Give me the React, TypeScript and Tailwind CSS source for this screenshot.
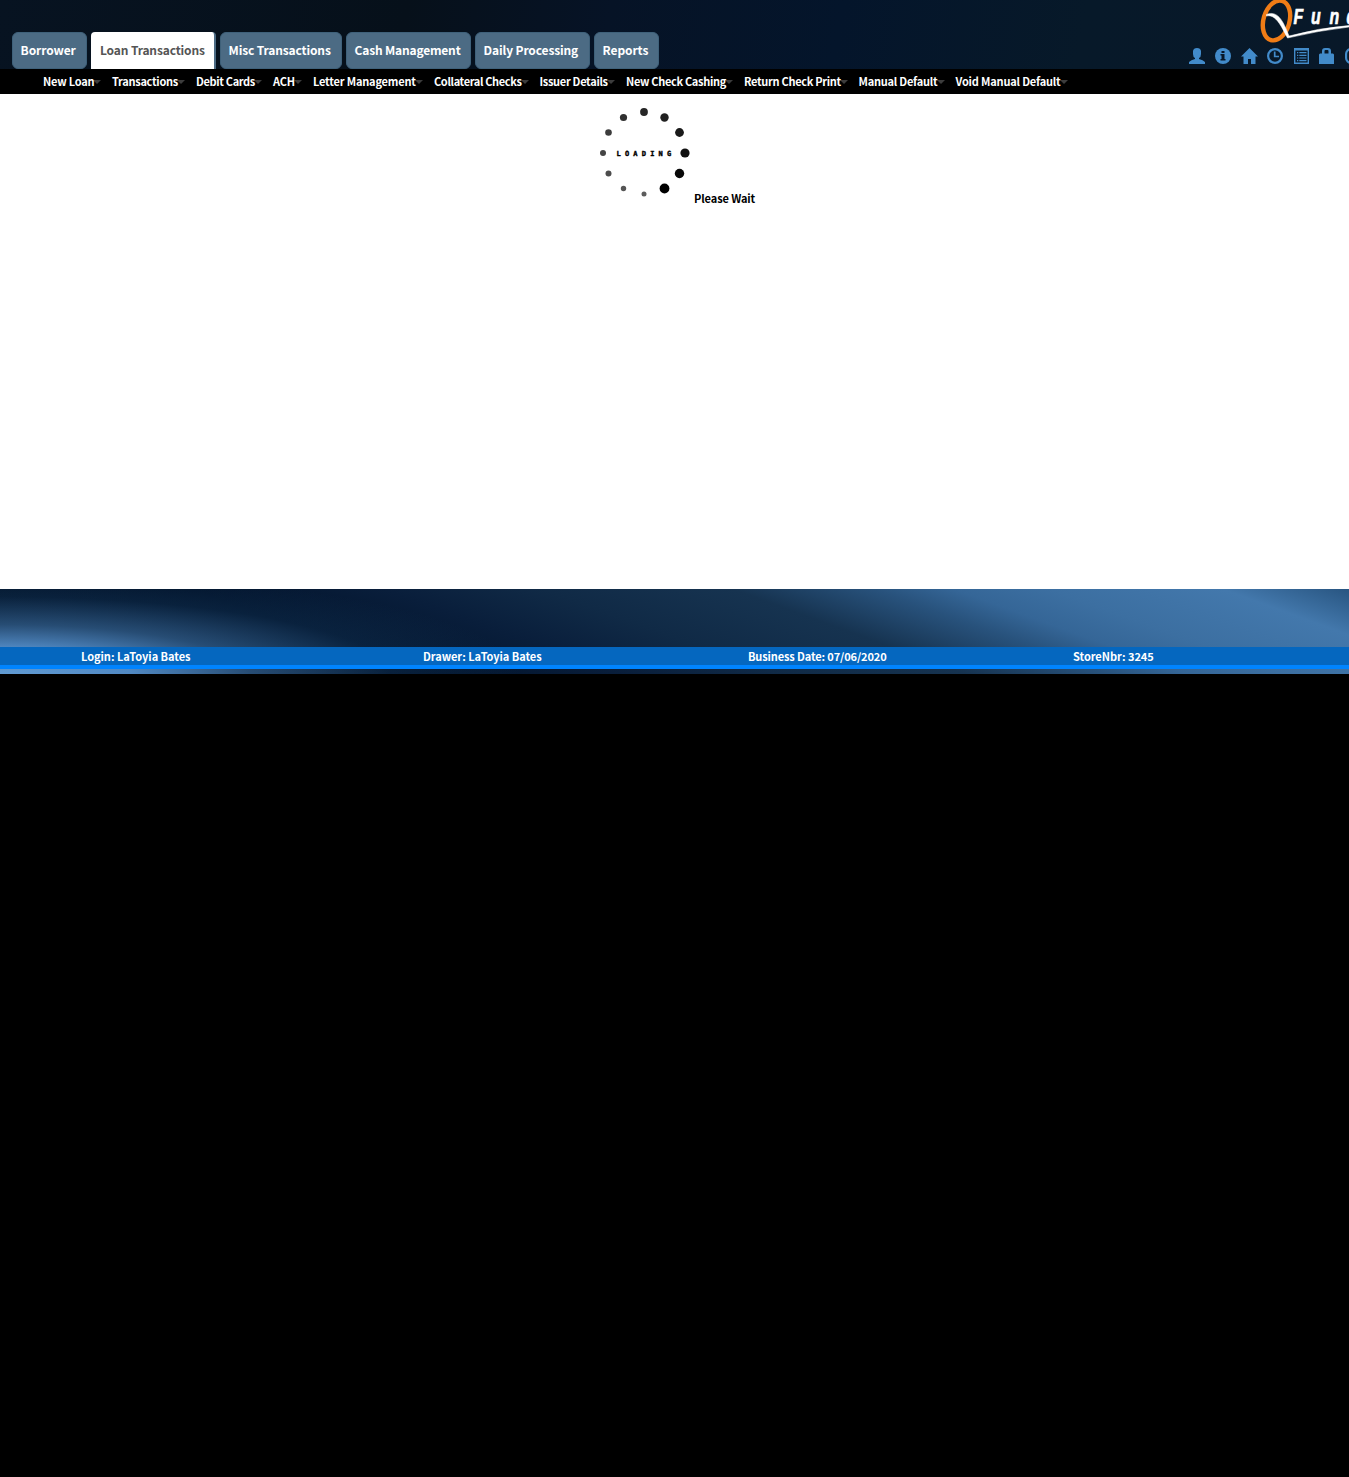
import React from "react";

const tabs = [
  { label: "Borrower", width: "w-[75px]", track: "tracking-[-0.1px]" },
  { label: "Loan Transactions", width: "w-[125px]", track: "tracking-[-0.14px]", active: true },
  { label: "Misc Transactions", width: "w-[122px]", track: "tracking-[-0.14px]" },
  { label: "Cash Management", width: "w-[125px]", track: "tracking-[-0.18px]" },
  { label: "Daily Processing", width: "w-[115px]", track: "tracking-[-0.13px]" },
  { label: "Reports", width: "w-[65px]", track: "tracking-[-0.1px]" },
];

const menu = [
  { label: "New Loan", width: "w-[51px]", track: "tracking-[-0.22px]" },
  { label: "Transactions", width: "w-[66px]", track: "tracking-[-0.28px]" },
  { label: "Debit Cards", width: "w-[59px]", track: "tracking-[-0.34px]" },
  { label: "ACH", width: "w-[22px]", track: "tracking-[-0.2px]" },
  { label: "Letter Management", width: "w-[103px]", track: "tracking-[-0.18px]" },
  { label: "Collateral Checks", width: "w-[87.5px]", track: "tracking-[-0.35px]" },
  { label: "Issuer Details", width: "w-[68.5px]", track: "tracking-[-0.3px]" },
  { label: "New Check Cashing", width: "w-[100px]", track: "tracking-[-0.32px]" },
  { label: "Return Check Print", width: "w-[96.5px]", track: "tracking-[-0.3px]" },
  { label: "Manual Default", width: "w-[79px]", track: "tracking-[-0.22px]" },
  { label: "Void Manual Default", width: "w-[105px]", track: "tracking-[-0.18px]" },
];

const dots: [number, number, number, string][] = [
  [44, 8, 3.9, "#262626"],
  [64.5, 13.5, 4.2, "#202020"],
  [79.5, 28.5, 4.4, "#1a1a1a"],
  [85, 49, 4.6, "#111"],
  [79.5, 69.5, 4.7, "#080808"],
  [64.5, 84.5, 4.9, "#000"],
  [44, 90, 2.5, "#5c5c5c"],
  [23.5, 84.5, 2.7, "#555"],
  [8.5, 69.5, 3, "#4c4c4c"],
  [3, 49, 3, "#444"],
  [8.5, 28.5, 3.3, "#3c3c3c"],
  [23.5, 13.5, 3.6, "#303030"],
];

function Logo() {
  return (
    <svg className="absolute right-0 top-0" width="95" height="46" viewBox="0 0 95 46">
      <ellipse cx="22.5" cy="20.5" rx="13" ry="20.3" transform="rotate(16 22.5 20.5)" fill="none" stroke="#f07c16" strokeWidth="4.400" />
      <path d="M12.500 14.500C23 10 29 20 35 36Q64 28 95 25.500V27Q65 30.500 33.500 38C27 26 22 14 12.500 16Z" fill="#fff" stroke="#fff" strokeWidth=".5" />
      <g fill="#fff" stroke="#fff" strokeWidth=".7" fontFamily="Liberation Sans" fontWeight="bold" fontStyle="italic" fontSize="22">
        <text transform="translate(39.500 23.500) scale(.72 1)">F</text>
        <text transform="translate(57 23.500) scale(.72 1)">u</text>
        <text transform="translate(75.500 23.500) scale(.72 1)">n</text>
        <text transform="translate(92.500 23.500) scale(.72 1)">d</text>
      </g>
    </svg>
  );
}

function ToolIcons() {
  const c = "w-4 h-4 shrink-0";
  return (
    <div className="absolute left-[1189px] top-12 flex w-[160px] overflow-hidden text-[#428bca]">
      <svg className={c + " mr-[10px]"} viewBox="0 0 16 16" fill="currentColor">
        <path d="M4 3Q4.500 0 8 0t4 3v3q0 3-2 4v1q4 1 6 3v2H0v-2q2-2 6-3v-1Q4 9 4 6Z" />
      </svg>
      <svg className={c + " mr-[10px]"} viewBox="0 0 16 16">
        <circle cx="8" cy="8" r="8" fill="currentColor" />
        <path d="M6.500 3h3v2h-3zM5.500 6h4v5h1v1.500h-5V11h1V7.500h-1z" fill="#081829" />
      </svg>
      <svg className="mr-[9px] h-4 w-[17px] shrink-0" viewBox="0 0 17 16" fill="currentColor">
        <path d="M8.500 0 17 8.500h-2.500V16H10v-5H7v5H2.500V8.500H0Z" />
      </svg>
      <svg className={c + " mr-[11px]"} viewBox="0 0 16 16" fill="none" stroke="currentColor">
        <circle cx="8" cy="8" r="6.900" strokeWidth="2.200" />
        <path d="M7.700 3.500v5H12" strokeWidth="1.700" />
      </svg>
      <svg className="mr-[9px] h-4 w-4 shrink-0" viewBox="0 0 16 16" fill="currentColor">
        <path fillRule="evenodd" d="M0 0h15v16H0zM1.400 2.500v12h12.200v-12z" />
        <path d="M3 4h1.300v1.200H3zM5.300 4H12.500v1.200H5.300zM3 6.700h1.300v1.200H3zM5.300 6.700h7.200v1.200H5.300zM3 9.400h1.300v1.200H3zM5.300 9.400h7.200v1.200H5.300zM3 12h1.300v1.200H3zM5.300 12h7.200v1.200H5.300z" />
      </svg>
      <svg className={c + " mr-[10px]"} viewBox="0 0 16 16" fill="currentColor">
        <path fillRule="evenodd" d="M3 5.500V3Q3 0 6 0h3q3 0 3 3v2.500h2l1 1V16H0V6.500l1-1ZM5.500 5.500h4V3q0-1-1-1h-2q-1 0-1 1Z" />
      </svg>
      <svg className={c} viewBox="0 0 16 16" fill="none" stroke="currentColor">
        <rect x="1.100" y="1.100" width="14" height="13.800" rx="5" strokeWidth="2.200" />
      </svg>
    </div>
  );
}

export default function App() {
  return (
    <div className="min-h-[1477px] w-[1349px] overflow-hidden bg-black font-['Noto_Sans_CJK_SC',sans-serif]">
      <header className="relative flex h-[69px] items-end bg-[linear-gradient(100deg,#071321_0%,#06101a_30%,#061326_45%,#04152b_62%,#071929_80%,#081829_100%)] pl-3">
        <nav className="flex gap-1">
          {tabs.map((t) => (
            <a
              key={t.label}
              className={
                t.width + " " + t.track +
                " flex h-[37px] items-center overflow-hidden whitespace-nowrap pb-[2px] text-[12px] font-bold leading-4 " +
                (t.active
                  ? "rounded-t border-r-2 border-[#4c6b84] bg-white pl-[9px] text-[#555]"
                  : "rounded-md border border-[#3f617a] bg-[#4c6b84] pl-[7.6px] text-white")
              }
            >
              {t.label}
            </a>
          ))}
        </nav>
        <Logo />
        <ToolIcons />
      </header>
      <nav className="flex h-[25px] items-center gap-[18px] bg-black pb-[2px] pl-[43px] text-[11px] font-bold text-white">
        {menu.map((m) => (
          <a key={m.label} className={m.width + " " + m.track + " relative whitespace-nowrap leading-4"}>
            <span className="absolute left-full top-[7px] -ml-px border-x-[4px] border-t-4 border-x-transparent border-t-[#3c3c3c]" />
            <span className="relative">{m.label}</span>
          </a>
        ))}
      </nav>
      <main className="flex h-[495px] items-start bg-white pl-[600px] pt-[10px]">
        <div className="relative h-[100px] w-[94px]">
          <svg width="94" height="100" viewBox="0 0 94 100">
            {dots.map(([x, y, r, fill]) => (
              <circle key={x + "-" + y} cx={x} cy={y} r={r} fill={fill} />
            ))}
          </svg>
          <span className="absolute left-[16.5px] top-[46px] font-['DejaVu_Sans_Mono',monospace] text-[7px] font-bold leading-[9px] tracking-[4.2px] text-black [-webkit-text-stroke:0.4px_black]">LOADING</span>
        </div>
        <span className="mt-[86px] whitespace-nowrap text-[11px] font-bold leading-4 tracking-[-0.1px] text-black">Please Wait</span>
      </main>
      <footer className="h-[85px] bg-[radial-gradient(ellipse_520px_103px_at_0_100%,#619bd3_0%,#5189c3_25%,#305b87cc_48%,#173c6055_75%,transparent_100%),linear-gradient(20deg,#031327_0%,#02142c_27%,#091e3b_39%,#102a46_49%,#163350_61%,#28527c_70%,#356697_75%,#3c6fa1_81%,#4378ac_92%,#285581_100%)] pt-[58px]">
        <div className="flex h-[22px] border-b-4 border-[#0084ff] bg-[#0567bf] pl-[81px] text-[11px] font-bold leading-[18px] tracking-[-0.03px] text-white">
          <span className="w-[342px] whitespace-nowrap">Login: LaToyia Bates</span>
          <span className="w-[325px] whitespace-nowrap tracking-[-0.05px]">Drawer: LaToyia Bates</span>
          <span className="w-[325px] whitespace-nowrap tracking-[-0.12px]">Business Date: 07/06/2020</span>
          <span className="whitespace-nowrap">StoreNbr: 3245</span>
        </div>
      </footer>
    </div>
  );
}
